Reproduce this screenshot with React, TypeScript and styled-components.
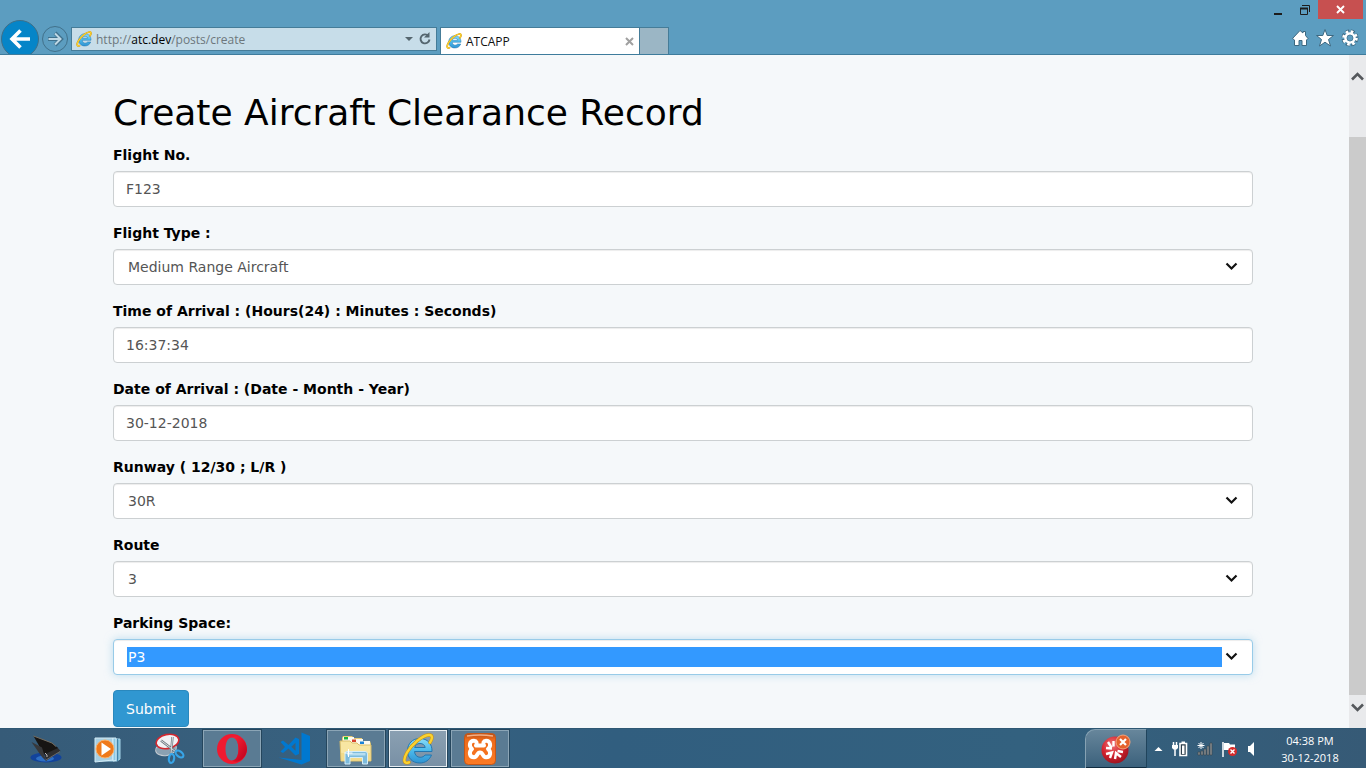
import React from 'react';
import styled, { createGlobalStyle } from 'styled-components';

const GlobalStyle = createGlobalStyle`
  * { box-sizing: border-box; }
  body { margin: 0; font-family: "DejaVu Sans", Verdana, sans-serif; }
  svg { display: block; flex: none; }
`;

const Desktop = styled.div`
  display: flex;
  flex-direction: column;
  min-height: 100vh;
  background: #f5f8fa;
`;

/* ---------- browser window frame ---------- */

const BrowserBar = styled.header`
  display: grid;
  grid-template-rows: 19px 35px;
  background: #5c9dc0;
  border-bottom: 1px solid #3e7c9c;
  font-family: "Open Sans", "Noto Sans", sans-serif;
`;

const TitleRow = styled.div`
  display: flex;
  justify-content: flex-end;
  padding-right: 3px;
`;

const WindowButton = styled.button<{ $close?: boolean }>`
  width: ${p => (p.$close ? 45 : 27)}px;
  height: 19px;
  display: grid;
  place-items: center;
  padding: 0;
  border: 0;
  background: ${p => (p.$close ? '#c75050' : 'transparent')};
`;

const NavRow = styled.div`
  display: flex;
  align-items: flex-end;
`;

const BackButton = styled.button`
  width: 41px;
  height: 35px;
  padding: 0;
  border: 0;
  background: none;
  overflow: hidden;
`;

const ForwardButton = styled.button`
  width: 28px;
  height: 28px;
  margin: 0 2px 1px 0;
  padding: 0;
  border: 0;
  background: none;
`;

const AddressBar = styled.div`
  flex: 0 1 366px;
  height: 24px;
  margin-bottom: 3px;
  padding: 0 3px 0 4px;
  display: flex;
  align-items: center;
  gap: 4px;
  border: 1px solid #457c98;
  background: #c7dde9;
`;

const Address = styled.a`
  flex: 1;
  padding-top: 2px;
  font-size: 12px;
  line-height: 20px;
  color: #6d777c;
  text-decoration: none;
  b { font-weight: 400; color: #000; }
`;

const PlainButton = styled.button`
  padding: 0;
  border: 0;
  background: none;
  display: grid;
  place-items: center;
`;

const Tab = styled.div`
  flex: 0 1 200px;
  height: 27px;
  margin-left: 3px;
  padding: 0 5px;
  display: flex;
  align-items: center;
  gap: 4px;
  border: 1px solid #457c98;
  border-bottom: 0;
  background: #fff;
  font-size: 12px;
  color: #111;
  span { flex: 1; }
`;

const NewTab = styled.button`
  width: 29px;
  height: 27px;
  padding: 0;
  border: 1px solid #457c98;
  border-width: 1px 1px 0 0;
  background: #9bb6c5;
`;

const Tools = styled.div`
  display: flex;
  gap: 7px;
  margin: 0 7px 7px auto;
`;

/* ---------- page ---------- */

const Viewport = styled.div`
  flex: 1;
  display: flex;
`;

const Page = styled.main`
  flex: 1;
  padding: 38px 96px 0 113px;
`;

const Heading = styled.h1`
  margin: 0 0 11px;
  font-size: 36px;
  line-height: 40px;
  font-weight: 400;
  color: #000;
`;

const Group = styled.div`
  margin-bottom: 15px;
  position: relative;
`;

const Label = styled.label`
  display: block;
  margin-bottom: 5px;
  font-size: 14px;
  line-height: 22px;
  font-weight: 700;
  color: #000;
`;

const TextField = styled.input`
  display: block;
  width: 100%;
  height: 36px;
  padding: 7px 12px;
  border: 1px solid #ccd0d2;
  border-radius: 4px;
  outline: 0;
  background: #fff;
  box-shadow: inset 0 1px 1px rgba(0, 0, 0, 0.075);
  font: 14px/20px "DejaVu Sans", Verdana, sans-serif;
  color: #555;
`;

const SelectField = styled.select<{ $active?: boolean }>`
  appearance: none;
  display: block;
  width: 100%;
  height: 36px;
  padding: 7px 30px 7px 13px;
  border: 1px solid ${p => (p.$active ? '#98cbe8' : '#ccd0d2')};
  border-radius: 4px;
  outline: 0;
  background: ${p => (p.$active ? 'linear-gradient(#39f, #39f) content-box, #fff' : '#fff')};
  box-shadow: inset 0 1px 1px rgba(0, 0, 0, 0.075)${p => (p.$active ? ', 0 0 8px rgba(152, 203, 232, 0.6)' : '')};
  font: 14px/20px "DejaVu Sans", Verdana, sans-serif;
  text-indent: 1px;
  color: ${p => (p.$active ? '#fff' : '#555')};
`;

const SelectArrow = styled.svg`
  position: absolute;
  right: 15px;
  bottom: 14px;
  pointer-events: none;
`;

const Submit = styled.button`
  display: block;
  height: 37px;
  padding: 0 12px;
  border: 1px solid #2a88bd;
  border-radius: 4px;
  background: #3097d1;
  font: 14px/22px "DejaVu Sans", Verdana, sans-serif;
  color: #fff;
`;

const Scrollbar = styled.div`
  width: 17px;
  padding-bottom: 10px;
  display: flex;
  flex-direction: column;
  background: #e9eaec;
`;

const ScrollButton = styled(PlainButton)<{ $tall?: boolean }>`
  height: ${p => (p.$tall ? 43 : 22)}px;
`;

const ScrollThumb = styled.div`
  flex: 1;
  margin: 39px 0 1px;
  background: #cbcbcb;
`;

/* ---------- taskbar ---------- */

const Taskbar = styled.footer`
  height: 40px;
  display: flex;
  background: linear-gradient(90deg, #365b78, #38617f 25%, #315e7f 45%, #33617f 75%, #365a76);
  border-top: 1px solid #2f5873;
  font-family: "Open Sans", "Noto Sans", sans-serif;
`;

const Apps = styled.div`
  display: flex;
  gap: 2px;
  padding-left: 16px;
`;

const AppButton = styled.button<{ $state?: 'open' | 'active' }>`
  width: 60px;
  height: 39px;
  padding: 0;
  display: grid;
  place-items: center;
  border: 1px solid ${p => (p.$state ? '#25465d' : 'transparent')};
  background: ${p =>
    p.$state === 'active' ? 'linear-gradient(#8ba0b2, #7890a5)' : p.$state ? '#5a7b93' : 'transparent'};
  box-shadow: ${p =>
    p.$state === 'active' ? 'inset 0 0 0 1px #e6edf2' : p.$state ? 'inset 0 0 0 1px #8ba5b6' : 'none'};
`;

const Tray = styled.div`
  margin-left: auto;
  display: flex;
  align-items: center;
`;

const AlertButton = styled(PlainButton)`
  width: 62px;
  height: 39px;
  border: 1px solid #86a2b3;
  border-width: 1px 1px 0 1px;
  border-right-color: #20445c;
  border-radius: 10px 0 0 0;
  background: linear-gradient(#67869b, #3a607b);
  box-shadow: inset 0 -1px #102c40;
`;

const TrayIcons = styled.div`
  display: flex;
  align-items: center;
  gap: 8px;
  padding: 0 16px 0 7px;
`;

const Clock = styled.time`
  width: 76px;
  margin-right: 18px;
  font-size: 11px;
  line-height: 17px;
  text-align: center;
  color: #fff;
`;

/* ---------- drawings ---------- */

const IeLogo = ({ size = 16 }: { size?: number }) => (
  <svg width={size} height={size} viewBox="0 0 32 32">
    <defs>
      <linearGradient id="ieBlue" x1="0" y1="0" x2="0" y2="1">
        <stop offset="0" stopColor="#8adcf8" />
        <stop offset=".5" stopColor="#4bb9ea" />
        <stop offset="1" stopColor="#2f93d2" />
      </linearGradient>
    </defs>
    <path
      d="M30 18.500H12.500C12.800 22 15 24.300 18.200 24.300C20.500 24.300 22 23.400 23 22H29.500C27.500 27 23.300 30 17.800 30C10.300 30 5.500 24.800 5.500 17.800C5.500 10.500 10.500 5.500 17.800 5.500C25.500 5.500 30.300 10.800 30 18.500ZM23.200 14.500C22.800 12 20.800 10.500 18 10.500C15.200 10.500 13.200 12 12.700 14.500Z"
      fill="url(#ieBlue)"
      stroke="#2377b0"
      strokeWidth="1"
    />
    <path
      d="M28 9.500C31 5 30.500 1.500 26.500 2C20 2.700 10 11 5 19.500C1 26.500 1.500 31.500 7 29.300"
      fill="none"
      stroke="#c98f12"
      strokeWidth="3.400"
      strokeLinecap="round"
    />
    <path
      d="M28 9.500C31 5 30.500 1.500 26.500 2C20 2.700 10 11 5 19.500C1 26.500 1.500 31.500 7 29.300"
      fill="none"
      stroke="#fbd22f"
      strokeWidth="2.400"
      strokeLinecap="round"
    />
  </svg>
);

const Laptop = () => (
  <svg width="32" height="32" viewBox="0 0 32 32">
    <ellipse cx="16" cy="24.500" rx="15.500" ry="5" fill="#12439b" />
    <ellipse cx="15" cy="25.500" rx="9" ry="3" fill="#2e6fc4" />
    <path d="M14 20L27 14L30.500 18L16 28Z" fill="#2e2e30" />
    <path d="M3.500 3L22 10L28 15L14 21.500Z" fill="#171513" />
    <path d="M3.500 3L22 10L26 13.500" fill="none" stroke="#756d60" />
    <path d="M1.500 9L12 14.500L14 21L16 28L12 24Z" fill="#37383a" />
    <path d="M16 27L30 18.500" stroke="#6a6a6a" />
    <path d="M15 20l2 2M16 23h2" stroke="#b9b9b9" />
  </svg>
);

const MediaPlayer = () => (
  <svg width="30" height="30" viewBox="0 0 30 30">
    <path d="M8 5H27V25L24 27H8Z" fill="#79b8d6" stroke="#a8d8ec" />
    <path d="M24.500 5V27" stroke="#4384a8" />
    <path d="M2 4H20V26L2 28Z" fill="#a6cfe3" stroke="#d4ecf6" />
    <path d="M20 4H23V26.500L20 27Z" fill="#8cc8e4" stroke="#d4ecf6" />
    <circle cx="12" cy="15" r="9" fill="#ef7a1b" stroke="#fbb26b" />
    <path d="M8.500 8.500L18 15L8.500 21.500Z" fill="#fff" />
  </svg>
);

const Snipping = () => (
  <svg width="32" height="32" viewBox="0 0 32 32">
    <ellipse cx="12" cy="16" rx="10.500" ry="6.500" fill="#8ba1b2" stroke="#c6ccd2" transform="rotate(-10 12 16)" />
    <ellipse cx="13.500" cy="8.500" rx="11.500" ry="7" fill="#f1f1f4" stroke="#d3272f" strokeWidth="1.600" transform="rotate(-12 13.500 8.500)" />
    <path d="M7 7.500L22 19M18.500 4L17 20" stroke="#707a82" strokeWidth="2.400" />
    <path d="M7 7.500L22 19M18.500 4L17 20" stroke="#d8dde1" strokeWidth="1" />
    <ellipse cx="25.500" cy="21" rx="4.500" ry="2.600" fill="none" stroke="#38a5e8" strokeWidth="2.200" transform="rotate(38 25.500 21)" />
    <ellipse cx="17.500" cy="25.500" rx="2.600" ry="4.500" fill="none" stroke="#38a5e8" strokeWidth="2.200" transform="rotate(8 17.500 25.500)" />
  </svg>
);

const Opera = () => (
  <svg width="32" height="32" viewBox="0 0 32 32">
    <defs>
      <linearGradient id="operaRed" x1="0" y1="0" x2="1" y2="1">
        <stop offset="0" stopColor="#ff2438" />
        <stop offset="1" stopColor="#b8001c" />
      </linearGradient>
    </defs>
    <path
      fillRule="evenodd"
      d="M16 1A15 15 0 1 0 16 31A15 15 0 1 0 16 1ZM16 4.500C20.500 4.500 22.500 10 22.500 16S20.500 27.500 16 27.500S9.500 22 9.500 16S11.500 4.500 16 4.500Z"
      fill="#f01a30"
    />
    <path d="M16 4.500C20.500 4.500 22.500 10 22.500 16S20.500 27.500 16 27.500C22 31.500 30 25 31 17C31 9 25 .500 16 4.500Z" fill="url(#operaRed)" />
  </svg>
);

const VsCode = () => (
  <svg width="33" height="33" viewBox="0 0 33 33">
    <path d="M23.500 0.500L32 4V29L23.500 32.500L0.500 25.500L23.500 28Z" fill="#0078d0" />
    <path
      fillRule="evenodd"
      d="M2.500 10L5 8.500L10.500 13L17.500 5.500L21 7V22L17.500 23.500L10.500 16.500L5 21L2.500 19.500L7 15ZM13.300 14.800L17.500 18.800V10.800Z"
      fill="#0078d0"
    />
  </svg>
);

const Explorer = () => (
  <svg width="34" height="32" viewBox="0 0 34 32">
    <path d="M3 5L4 3H13L15 5H23V8H31L32 11V28H3Z" fill="#e8cc73" />
    <path d="M4 4H15V8H4ZM12 6H24V10H12ZM19 8H31V12H19Z" fill="#fdfaf0" />
    <path d="M5 4h4v2.500H5z" fill="#16b53f" />
    <path d="M13 6.500h4V9h-4z" fill="#d7432c" />
    <path d="M21 8.500h4V11h-4z" fill="#1b83d8" />
    <path d="M1 8H11L13 10H18L20 12H32V28H2Z" fill="#f8e6a2" stroke="#d9bd68" />
    <path d="M2 20H32V28H2Z" fill="#f0d581" opacity=".7" />
    <path d="M6 31V20.500C6 19 7 18.500 8 18.500H26C27.500 18.500 28.500 19.500 28.500 21V31H23.500V24.500H11V31Z" fill="#7dbbdc" stroke="#d5edf8" />
    <path d="M8 20H26.500V22.500H8Z" fill="#b7def0" />
    <path d="M9.500 16V24M5.500 20H13.500" stroke="#fff" />
  </svg>
);

const Xampp = () => (
  <svg width="32" height="32" viewBox="0 0 32 32">
    <defs>
      <linearGradient id="xamppOrange" x1="0" y1="0" x2="0" y2="1">
        <stop offset="0" stopColor="#b94f16" />
        <stop offset=".2" stopColor="#ee6b1b" />
        <stop offset="1" stopColor="#fb7a24" />
      </linearGradient>
    </defs>
    <rect x=".5" y=".5" width="31" height="31" rx="4" fill="url(#xamppOrange)" stroke="#c65717" />
    <path d="M3 3Q16 1 29 3" fill="none" stroke="#f3b188" strokeWidth="1.500" />
    <path
      d="M12 12.500H20C18.500 10 19.500 7.800 22 7.800C26.500 7.800 27.500 13 24 16C27.500 19 26.500 24.200 22 24.200C18 24.200 19.500 19.500 16 19.500S14 24.200 10 24.200C5.500 24.200 4.500 19 8 16C4.500 13 5.500 7.800 10 7.800C12.500 7.800 13.500 10 12 12.500"
      fill="none"
      stroke="#fff"
      strokeWidth="4"
      strokeLinecap="round"
      strokeLinejoin="round"
    />
  </svg>
);

const AlertOrb = () => (
  <svg width="30" height="30" viewBox="0 0 30 30">
    <defs>
      <radialGradient id="orb" cx=".4" cy=".3" r=".8">
        <stop offset="0" stopColor="#ef7778" />
        <stop offset=".5" stopColor="#d3222e" />
        <stop offset="1" stopColor="#8f101b" />
      </radialGradient>
    </defs>
    <circle cx="14" cy="16" r="13.500" fill="url(#orb)" />
    <path
      d="M7 8L10.500 13.500M5 14L11 14.500M12.500 7V12.500M5 20L11 18.500L9 24M14 25L15 19L20 23M22 18L16.500 17"
      fill="none"
      stroke="#fff"
      strokeWidth="2.400"
    />
    <circle cx="22" cy="8" r="7" fill="#e5622d" stroke="#f5a47c" />
    <path d="M19 5L25 11M25 5L19 11" stroke="#fff" strokeWidth="2.200" />
  </svg>
);

const Arrow = () => (
  <SelectArrow width="13" height="9" viewBox="0 0 13 9">
    <path d="M1.500 1.500L6.500 6.500L11.500 1.500" fill="none" stroke="#111" strokeWidth="2.200" />
  </SelectArrow>
);

/* ---------- form parts ---------- */

type FieldProps = { id: string; label: string; value: string; active?: boolean };

const InputGroup = ({ id, label, value }: FieldProps) => (
  <Group>
    <Label htmlFor={id}>{label}</Label>
    <TextField id={id} type="text" defaultValue={value} />
  </Group>
);

const SelectGroup = ({ id, label, value, active }: FieldProps) => (
  <Group>
    <Label htmlFor={id}>{label}</Label>
    <SelectField id={id} $active={active} defaultValue={value}>
      <option>{value}</option>
    </SelectField>
    <Arrow />
  </Group>
);

export default function App() {
  return (
    <Desktop>
      <GlobalStyle />
      <BrowserBar>
        <TitleRow>
          <WindowButton aria-label="Minimize">
            <svg width="10" height="14"><path d="M1 11H9" stroke="#1c1c1c" strokeWidth="2" /></svg>
          </WindowButton>
          <WindowButton aria-label="Restore">
            <svg width="12" height="12">
              <path d="M1.500 4.500H8.500V10.500H1.500ZM3 1.500H10.500V8" fill="none" stroke="#1c1c1c" />
              <path d="M1 4.500H9" stroke="#1c1c1c" strokeWidth="2" />
            </svg>
          </WindowButton>
          <WindowButton $close aria-label="Close">
            <svg width="9" height="9"><path d="M1 1L8 8M8 1L1 8" stroke="#fff" strokeWidth="1.900" /></svg>
          </WindowButton>
        </TitleRow>
        <NavRow>
          <BackButton aria-label="Back">
            <svg width="41" height="35" viewBox="0 0 41 35">
              <circle cx="20" cy="20" r="18.500" fill="#0585c8" stroke="#3f6f88" />
              <path d="M30 20H12M20.500 11.500L12 20L20.500 28.500" fill="none" stroke="#fff" strokeWidth="3.600" />
            </svg>
          </BackButton>
          <ForwardButton aria-label="Forward">
            <svg width="28" height="28" viewBox="0 0 28 28">
              <circle cx="14" cy="14" r="12.500" fill="none" stroke="#41718b" />
              <path d="M7 14H20M14 8L20 14L14 20" fill="none" stroke="#3f718d" strokeWidth="4" />
              <path d="M7.500 14H19.500M14 8.500L19.500 14L14 19.500" fill="none" stroke="#bfd8e5" strokeWidth="2" />
            </svg>
          </ForwardButton>
          <AddressBar>
            <IeLogo />
            <Address href="#">http://<b>atc.dev</b>/posts/create</Address>
            <PlainButton aria-label="Show addresses">
              <svg width="8" height="5"><path d="M0 0H8L4 4Z" fill="#55666f" /></svg>
            </PlainButton>
            <PlainButton aria-label="Refresh">
              <svg width="16" height="16" viewBox="0 0 16 16">
                <path d="M11.500 5A4.500 4.500 0 1 0 12.500 8.500" fill="none" stroke="#55666f" strokeWidth="1.900" />
                <path d="M12.500 1V6.500H7Z" fill="#55666f" />
              </svg>
            </PlainButton>
          </AddressBar>
          <Tab>
            <IeLogo />
            <span>ATCAPP</span>
            <PlainButton aria-label="Close tab">
              <svg width="9" height="9"><path d="M1 1L8 8M8 1L1 8" stroke="#a0a0a0" strokeWidth="2" /></svg>
            </PlainButton>
          </Tab>
          <NewTab aria-label="New tab" />
          <Tools>
            <PlainButton aria-label="Home">
              <svg width="18" height="18" viewBox="0 0 18 18">
                <path d="M9 1.500L12 4V2.500H14.500V6.500L17 9.500L15.500 11V16.500H11V11.500H8V16.500H3.500V11L1.500 9.500Z" fill="#fff" stroke="#3d6880" />
              </svg>
            </PlainButton>
            <PlainButton aria-label="Favorites">
              <svg width="18" height="18" viewBox="0 0 18 18">
                <path d="M9 .500L11.200 6.500H17.500L12.500 10.500L14.500 17L9 13.200L3.500 17L5.500 10.500L.5 6.500H6.800Z" fill="#fff" stroke="#3d6880" />
              </svg>
            </PlainButton>
            <PlainButton aria-label="Tools">
              <svg width="18" height="18" viewBox="0 0 18 18">
                <circle cx="9" cy="9" r="6.500" fill="none" stroke="#3d6880" strokeWidth="4" strokeDasharray="3.600 1.500" />
                <circle cx="9" cy="9" r="6.300" fill="none" stroke="#fff" strokeWidth="3" strokeDasharray="2.500 2.448" />
                <circle cx="9" cy="9" r="4.500" fill="none" stroke="#fff" strokeWidth="2.600" />
                <circle cx="9" cy="9" r="3" fill="none" stroke="#3d6880" strokeWidth=".6" />
              </svg>
            </PlainButton>
          </Tools>
        </NavRow>
      </BrowserBar>

      <Viewport>
        <Page>
          <Heading>Create Aircraft Clearance Record</Heading>
          <form onSubmit={e => e.preventDefault()}>
            <InputGroup id="flight-no" label="Flight No." value="F123" />
            <SelectGroup id="flight-type" label="Flight Type :" value="Medium Range Aircraft" />
            <InputGroup id="time" label="Time of Arrival : (Hours(24) : Minutes : Seconds)" value="16:37:34" />
            <InputGroup id="date" label="Date of Arrival : (Date - Month - Year)" value="30-12-2018" />
            <SelectGroup id="runway" label="Runway ( 12/30 ; L/R )" value="30R" />
            <SelectGroup id="route" label="Route" value="3" />
            <SelectGroup id="parking" label="Parking Space:" value="P3" active />
            <Submit type="submit">Submit</Submit>
          </form>
        </Page>
        <Scrollbar>
          <ScrollButton $tall aria-label="Scroll up">
            <svg width="13" height="9"><path d="M1 7.500L6.500 2L12 7.500" fill="none" stroke="#55585c" strokeWidth="2.600" /></svg>
          </ScrollButton>
          <ScrollThumb />
          <ScrollButton aria-label="Scroll down">
            <svg width="13" height="9"><path d="M1 1.500L6.500 7L12 1.500" fill="none" stroke="#55585c" strokeWidth="2.600" /></svg>
          </ScrollButton>
        </Scrollbar>
      </Viewport>

      <Taskbar>
        <Apps>
          <AppButton aria-label="Laptop"><Laptop /></AppButton>
          <AppButton aria-label="Media player"><MediaPlayer /></AppButton>
          <AppButton aria-label="Snipping tool"><Snipping /></AppButton>
          <AppButton aria-label="Opera" $state="open"><Opera /></AppButton>
          <AppButton aria-label="Code editor"><VsCode /></AppButton>
          <AppButton aria-label="File explorer" $state="open"><Explorer /></AppButton>
          <AppButton aria-label="Internet Explorer" $state="active"><IeLogo size={32} /></AppButton>
          <AppButton aria-label="XAMPP" $state="open"><Xampp /></AppButton>
        </Apps>
        <Tray>
          <AlertButton aria-label="Alert"><AlertOrb /></AlertButton>
          <TrayIcons>
            <svg width="9" height="6"><path d="M.5 5L4.500 1L8.500 5Z" fill="#fff" /></svg>
            <svg width="18" height="16" viewBox="-1 0 18 16">
              <path d="M8 2.500H14.500V14.500H8Z" fill="#2c3e4a" stroke="#fff" strokeWidth="1.600" />
              <path d="M9.500 0.500h3.500v2H9.500z" fill="#fff" />
              <path d="M10 4.500h2.500v8.500H10z" fill="#fff" />
              <path d="M1.500 1V4M4.500 1V4M3 8V15" stroke="#fff" strokeWidth="1.500" />
              <path d="M0 4H6V7L4.500 8.500H1.500L0 7Z" fill="#fff" />
            </svg>
            <svg width="16" height="16" viewBox="0 0 16 16">
              <path d="M1 11h2v3H1zM4 10h2v4H4zM7 8h2v6H7zM10 5h2v9h-2zM13 2h2v12h-2z" fill="#8a9093" stroke="#39434a" strokeWidth=".6" />
              <path d="M4 1V8M.5 4.500H7.500M1.500 2L6.500 7M6.500 2L1.500 7" stroke="#fff" />
            </svg>
            <svg width="17" height="16" viewBox="0 0 17 16">
              <path d="M2 1V16" stroke="#fff" strokeWidth="1.500" />
              <path d="M3 2H8L9 3.500H14V9H3Z" fill="#fff" />
              <circle cx="11.500" cy="10.500" r="4.500" fill="#d62a2a" />
              <path d="M9.500 8.500L13.500 12.500M13.500 8.500L9.500 12.500" stroke="#fff" strokeWidth="1.400" />
            </svg>
            <svg width="10" height="16" viewBox="0 0 10 16">
              <path d="M2 5H4L8 1V15L4 11H2Z" fill="#fff" />
            </svg>
          </TrayIcons>
          <Clock>04:38 PM<br />30-12-2018</Clock>
        </Tray>
      </Taskbar>
    </Desktop>
  );
}
